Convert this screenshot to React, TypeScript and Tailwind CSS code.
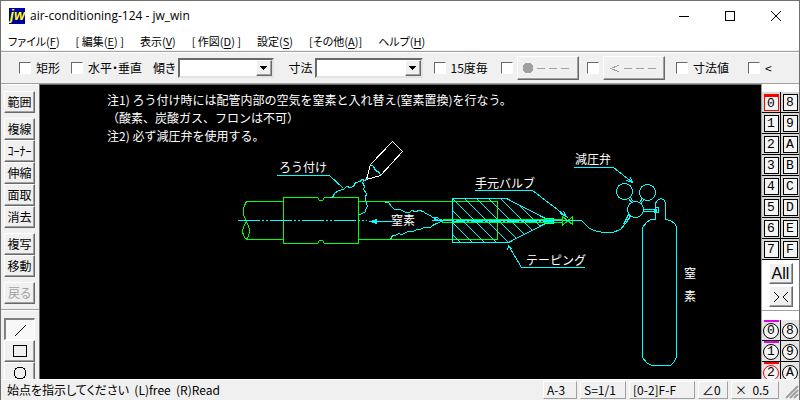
import React, { useState } from 'react';

const menus = [
  { before: 'ファイル(', key: 'F', after: ')' },
  { before: '[ 編集(', key: 'E', after: ') ]' },
  { before: '表示(', key: 'V', after: ')' },
  { before: '[ 作図(', key: 'D', after: ') ]' },
  { before: '設定(', key: 'S', after: ')' },
  { before: '[その他(', key: 'A', after: ')]' },
  { before: 'ヘルプ(', key: 'H', after: ')' }
];

const toolGroups = [['範囲'], ['複線', 'ｺｰﾅｰ', '伸縮', '面取', '消去'], ['複写', '移動'], ['戻る']];

const layers = ['0', '8', '1', '9', '2', 'A', '3', 'B', '4', 'C', '5', 'D', '6', 'E', '7', 'F'];
const layerGroups = ['0', '8', '1', '9', '2', 'A'];

const raised =
  'border border-t-white border-l-white border-r-[#696969] border-b-[#696969] bg-[#f0f0f0] shadow-[inset_-1px_-1px_0_#a0a0a0]';

const CheckBox = ({ label, name }: { label?: string; name: string }) => (
  <label className="flex items-center gap-[5px] whitespace-nowrap">
    <input
      type="checkbox"
      aria-label={label ? undefined : name}
      className="h-3 w-3 shrink-0 appearance-none border border-t-[#696969] border-l-[#696969] border-r-white border-b-white bg-white checked:bg-[#404040]"
    />
    {label}
  </label>
);

const Combo = ({ label, width }: { label: string; width: string }) => (
  <label className="flex items-center gap-0.5 whitespace-nowrap">
    {label}
    <span className={`relative flex h-5 ${width}`}>
      <select className="h-full w-full appearance-none border-2 border-t-[#696969] border-l-[#696969] border-r-[#e3e3e3] border-b-[#e3e3e3] bg-white px-1">
        <option value=""></option>
      </select>
      <span className={`pointer-events-none absolute top-0.5 right-0.5 bottom-0.5 flex w-4 items-center justify-center ${raised}`}>
        <svg width="7" height="4" viewBox="0 0 7 4" shapeRendering="crispEdges">
          <path d="M0 0h7v1H6v1H5v1H4v1H3V3H2V2H1V1H0z" />
        </svg>
      </span>
    </span>
  </label>
);

const Drawing = () => (
  <svg width="720" height="294" viewBox="40 85 720 294" className="block shrink-0" fill="none">
    <defs>
      <clipPath id="tape">
        <path d="M452 198H506L545 218H553V223H545L508 242H452z" />
      </clipPath>
    </defs>
    <g transform="translate(.5 .5)" shapeRendering="crispEdges" strokeWidth="1">
      {/* pipes and socket */}
      <g stroke="#00ff00">
        <path d="M245 201H283M245 239H283M358 201H497V239H358" />
        <path d="M246 201C242 207 241 213 246 221C250 228 250 234 246 239C241 234 241 228 246 221" />
        <path d="M283 197H317L319 200H322L324 197H358V243H324L322 240H319L317 243H283z" />
        <path d="M442 219H562M442 222H562M442 219V222" />
        <path d="M562 216V225L572 216V224L562 216" />
      </g>
      {/* torch */}
      <path stroke="#fff" d="M370 164L392 141L402 151L380 175L366 179z" />
      <g stroke="#00ffff">
        <path d="M370 164L373 166L375 170L379 172L380 175" />
        <path d="M276 175H329L343 188" />
        <path d="M329 197L332 197L334 193L338 190L343 189L346 186L350 187L353 186L355 182L360 181L361 179L365 180L367 178" />
        <path d="M365 179L362 182L364 186L363 189L366 193L365 197L366 203L367 206L365 209L365 211L362 213L359 214" />
        <path strokeDasharray="22 2 2 2 2 2" d="M237 220H366" />
        <path d="M369 221H391" />
        <path fill="#00ffff" d="M370 221L376 219V223z" />
        <path d="M384 202H388L391 206L394 209H399L402 210L405 212L409 212L411 210L415 211L419 210L423 211L425 213L430 215L432 217L437 217L439 219L443 220" />
        <path d="M390 239L392 235L395 235L398 233L401 234L404 233L407 231L413 231L416 229L419 229L424 227L430 227L432 225L436 223L441 221" />
        <path d="M431 220H438L434 218M434 219L442 221" />
        {/* taping */}
        <path d="M452 198H506L545 218H553V223H545L508 242H452z" />
        <g clipPath="url(#tape)">
          <path d="M416 198L460 242M428 198L472 242M440 198L484 242M452 198L496 242M464 198L508 242M476 198L520 242M488 198L532 242M500 198L544 242M512 198L556 242" />
        </g>
        <path d="M442 220H453M455 220H561" />
        <path strokeDasharray="12 2 2 2" d="M452 221H552" />
        <path d="M562 220H581L588 227L593 230L603 232H612L620 229L625 223L630 215" />
        <path d="M623 224L628 214M625 223L630 216" />
        {/* leaders */}
        <path d="M474 190H532L566 216M563 211L566 216L560 213" />
        <path d="M573 167H613L632 182M630 177L632 182L626 180" />
        <path d="M584 267H521L508 245M507 250L508 245L512 249" />
        {/* regulator */}
        <circle cx="624" cy="191" r="8" />
        <circle cx="647" cy="192" r="8" />
        <circle cx="635" cy="209" r="8" />
        <path d="M628 198L632 203M630 196L632 201M642 198L639 202M644 199L640 203" />
        <path d="M643 209H656M643 211H656M654 208V212M655 208V212M656 208V212M655 207H658V212H655" />
        {/* gas cylinder */}
        <path d="M655 219V203L656 201L658 199L661 198L664 200L665 203V219L670 220L674 223L677 228M676 226V356L674 361L670 365H651L646 362L642 357V227L646 222L650 219H655" />
      </g>
    </g>
    <g fill="#fff" className="whitespace-pre font-['Noto_Sans_CJK_JP',sans-serif] text-[12px] [font-feature-settings:normal]">
      <text x="107" y="105">注1)  ろう付け時には配管内部の空気を窒素と入れ替え(窒素置換)を行なう。</text>
      <text x="107" y="123">（酸素、炭酸ガス、フロンは不可）</text>
      <text x="107" y="141">注2)  必ず減圧弁を使用する。</text>
      <text x="279" y="172">ろう付け</text>
      <text x="391" y="225">窒素</text>
      <text x="475" y="188">手元バルブ</text>
      <text x="575" y="164">減圧弁</text>
      <text x="526" y="265">テーピング</text>
      <text x="684" y="278">窒</text>
      <text x="684" y="301">素</text>
    </g>
  </svg>
);

const App = () => {
  const [layer, setLayer] = useState('0');
  const [shape, setShape] = useState('line');

  return (
    <div className="flex h-screen flex-col overflow-hidden border border-b-0 border-[#707070] bg-[#f0f0f0] font-['Noto_Sans_CJK_JP',sans-serif] text-xs leading-4 text-black [font-feature-settings:'palt']">
      {/* Title bar */}
      <header className="flex h-[30px] shrink-0 items-center bg-white pl-2">
        <svg width="16" height="16" viewBox="0 0 16 16" className="mr-[5px]">
          <rect width="16" height="16" fill="#0000a0" />
          <text x="1" y="12" fill="#ffff00" fontSize="14" fontStyle="italic" fontWeight="bold" fontFamily="Liberation Sans">jw</text>
        </svg>
        <h1 className="flex-1 font-['Open_Sans',sans-serif] text-xs">air-conditioning-124 - jw_win</h1>
        <button aria-label="最小化" className="flex h-full w-[46px] items-center justify-center">
          <svg width="10" height="10" stroke="#000" shapeRendering="crispEdges"><path d="M0 5.5H10" /></svg>
        </button>
        <button aria-label="最大化" className="flex h-full w-[46px] items-center justify-center">
          <svg width="10" height="10" stroke="#000" fill="none" shapeRendering="crispEdges"><path d="M.5 .5H9.5V9.5H.5z" /></svg>
        </button>
        <button aria-label="閉じる" className="flex h-full w-[46px] items-center justify-center">
          <svg width="10" height="10" stroke="#000"><path d="M0 0L10 10M10 0L0 10" /></svg>
        </button>
      </header>

      {/* Menu */}
      <nav className="flex h-[19px] shrink-0 items-center gap-4 bg-white pl-[7px] text-[11px]">
        {menus.map((menu) => (
          <button key={menu.key} className="whitespace-nowrap">
            {menu.before}
            <u className="underline-offset-2">{menu.key}</u>
            {menu.after}
          </button>
        ))}
      </nav>

      {/* Tool options */}
      <div className="mt-px flex h-[33px] shrink-0 items-center gap-[11px] border-t border-b border-[#a0a0a0] pl-[18px] shadow-[inset_0_1px_0_#fff]">
        <CheckBox name="rect" label="矩形" />
        <CheckBox name="ortho" label="水平・垂直" />
        <Combo label="傾き" width="w-24" />
        <span className="ml-1">
          <Combo label="寸法" width="w-[108px]" />
        </span>
        <CheckBox name="deg15" label="15度毎" />
        <div className="ml-0.5 flex items-center gap-2">
          <span className="flex items-center gap-1">
            <CheckBox name="点付き" />
            <button disabled className={`flex h-6 w-[62px] items-center justify-center ${raised}`}>
              <svg width="52" height="12" fill="#a0a0a0" stroke="#a0a0a0" shapeRendering="crispEdges">
                <circle cx="6" cy="6" r="5" />
                <path fill="none" strokeDasharray="8 4" d="M15 6.5H48" />
              </svg>
            </button>
          </span>
          <span className="flex items-center gap-1">
            <CheckBox name="矢印付き" />
            <button disabled className={`flex h-6 w-[62px] items-center justify-center ${raised}`}>
              <svg width="52" height="12" fill="none" stroke="#a0a0a0" shapeRendering="crispEdges">
                <path d="M11 3L3 6.5L11 10" />
                <path strokeDasharray="8 4" d="M16 6.5H49" />
              </svg>
            </button>
          </span>
        </div>
        <CheckBox name="size" label="寸法値" />
        <span className="ml-2">
          <CheckBox name="arrow" label="<" />
        </span>
      </div>

      <main className="flex min-h-0 flex-1">
        {/* Left toolbar */}
        <aside className="flex w-[38px] shrink-0 flex-col overflow-hidden border-t border-white pt-1.5">
          {toolGroups.map((group) => (
            <div key={group[0]} className="mb-[5px] flex flex-col pl-[3px]">
              {group.map((tool) => (
                <button
                  key={tool}
                  disabled={tool === '戻る'}
                  className={`h-[22px] w-[31px] shrink-0 disabled:text-[#a0a0a0] ${raised}`}
                >
                  {tool}
                </button>
              ))}
            </div>
          ))}
          <div className="mb-[7px] h-0.5 shrink-0 border-t border-b border-t-[#a0a0a0] border-b-white" />
          <div className="flex flex-col pl-[3px]">
            {['line', 'rect', 'circle'].map((name) => (
              <button
                key={name}
                aria-label={name}
                onClick={() => setShape(name)}
                className={`flex h-[22px] w-[31px] shrink-0 items-center justify-center ${
                  shape === name ? 'border-2 border-r border-b border-t-[#808080] border-l-[#808080] border-r-white border-b-white bg-[#f8f8f8]' : raised
                }`}
              >
                <svg width="14" height="14" fill="none" stroke="#000" shapeRendering="crispEdges">
                  {name === 'line' && <path d="M2 13L13 2" />}
                  {name === 'rect' && <path d="M.5 1.5H13.5V12.5H.5z" />}
                  {name === 'circle' && <circle cx="7" cy="7" r="6" />}
                </svg>
              </button>
            ))}
          </div>
        </aside>

        <div className="min-w-0 flex-1 overflow-hidden border-t border-l border-[#696969] bg-black">
          <Drawing />
        </div>

        {/* Layers */}
        <aside className="flex w-[38px] shrink-0 flex-col overflow-hidden border-l border-[#a0a0a0] bg-white pt-2">
          <div className="grid shrink-0 grid-cols-2 gap-x-px bg-black">
            {layers.map((name) => (
              <button
                key={name}
                onClick={() => setLayer(name)}
                className="flex h-[21px] items-end justify-center border-b border-black bg-[#d8d8d8] pb-px font-['Liberation_Mono',monospace] text-[13px] leading-4"
              >
                <span
                  className={`flex h-[17px] w-[15px] items-center justify-center border bg-[#f4f4f4] ${
                    layer === name ? 'border-t-[3px] border-[#ff0000]' : 'border-black'
                  }`}
                >
                  {name}
                </span>
              </button>
            ))}
          </div>
          <div className="flex shrink-0 flex-col items-center gap-0.5 py-[3px]">
            <button className={`h-[21px] w-6 font-['Liberation_Sans',sans-serif] text-base leading-4 ${raised}`}>All</button>
            <button aria-label="切替" className={`flex h-[21px] w-6 items-center justify-center ${raised}`}>
              <svg width="16" height="12" fill="none" stroke="#000" shapeRendering="crispEdges">
                <path d="M1 1L6 6L1 11M15 1L10 6L15 11" />
              </svg>
            </button>
          </div>
          <div className="mb-[9px] h-px shrink-0 bg-[#a0a0a0]" />
          <div className="grid shrink-0 grid-cols-2 gap-x-px bg-black">
            {layerGroups.map((name, index) => (
              <button
                key={name}
                className="flex h-[21px] flex-col items-center border-b border-black bg-[#e4e4e4] font-['Liberation_Mono',monospace] text-[13px] leading-3"
              >
                <span
                  className={`h-0.5 w-[15px] shrink-0 ${name === '2' ? 'bg-[#ff0000]' : index % 2 === 0 ? 'bg-[#e000e0]' : ''}`}
                />
                <span
                  className={`mt-px flex h-4 w-4 shrink-0 items-center justify-center rounded-full border bg-[#f4f4f4] ${
                    name === '2' ? 'border-[#ff0000]' : 'border-black'
                  }`}
                >
                  {name}
                </span>
              </button>
            ))}
          </div>
        </aside>
      </main>

      {/* Status bar */}
      <footer className="flex h-[21px] shrink-0 items-center gap-[3px] border-t border-white bg-[#f0f0f0] pl-1.5">
        <p className="flex-1 whitespace-pre">始点を指示してください  (L)free  (R)Read</p>
        {[
          ['A-3', 'w-[34px]'],
          ['S=1/1', 'w-[46px]'],
          ['[0-2]F-F', 'w-[66px]'],
          ['∠0', 'w-[30px]'],
          ['×  0.5', 'w-12']
        ].map(([text, width]) => (
          <button
            key={text}
            className={`h-[18px] border border-t-white border-l-white border-r-[#a0a0a0] border-b-[#a0a0a0] px-[3px] text-left leading-4 whitespace-pre ${width}`}
          >
            {text}
          </button>
        ))}
        <svg width="17" height="18" stroke="#a0a0a0" strokeWidth="2">
          <path d="M4 17L16 5M8 17L16 9M12 17L16 13" />
        </svg>
      </footer>
    </div>
  );
};

export default App;
